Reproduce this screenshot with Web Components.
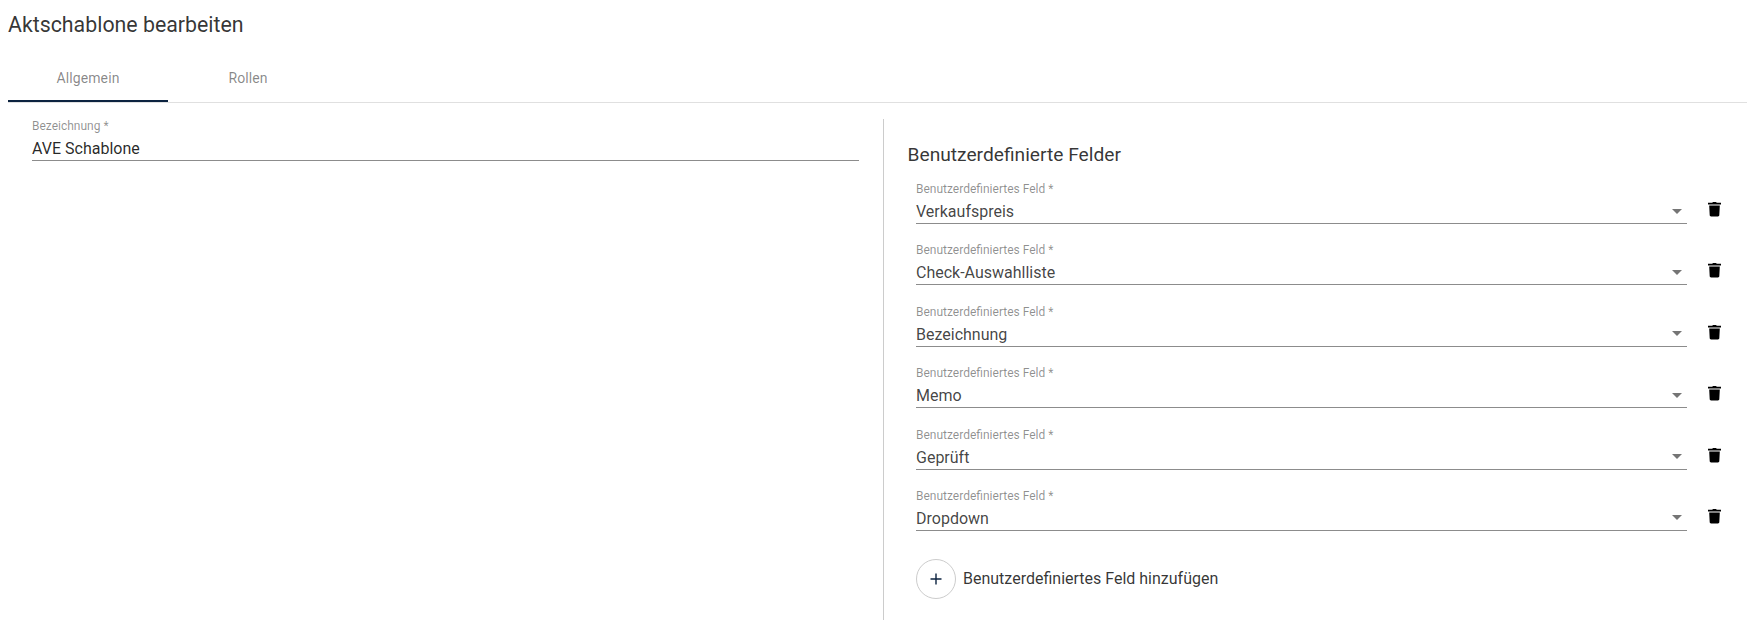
<!DOCTYPE html>
<html lang="de"><head><meta charset="utf-8"><style>
html,body{margin:0;background:#fff}
body{font-family:Roboto,sans-serif;height:620px;overflow:hidden}
</style></head><body>
<template id="t-field"><style>
:host{display:block;height:53px;position:relative;box-sizing:border-box;font-family:Roboto,sans-serif}
.l{font-size:12px;line-height:14px;color:rgba(0,0,0,.44);height:14px;white-space:nowrap}
.v{font-size:16px;line-height:20px;color:rgba(0,0,0,.85);height:20px;margin-top:6px;white-space:nowrap}
:host([select]) .v{color:rgba(0,0,0,.74)}
.u{height:1px;background:#8c8c8c;margin-top:1px}
.a{position:absolute;right:5px;top:26.5px;width:0;height:0;border-left:5px solid transparent;border-right:5px solid transparent;border-top:5px solid rgba(0,0,0,.54)}
:host(:not([select])) .a{display:none}
</style><div class="l"></div><div class="v"></div><div class="u"></div><div class="a"></div></template>
<script>
class AktField extends HTMLElement{constructor(){super();const r=this.attachShadow({mode:'open'});r.appendChild(document.getElementById('t-field').content.cloneNode(true));r.querySelector('.l').textContent=this.getAttribute('label');r.querySelector('.v').textContent=this.getAttribute('value');}}
customElements.define('akt-field',AktField);
class AktRow extends HTMLElement{constructor(){super();this.attachShadow({mode:'open'}).innerHTML=`<style>
:host{display:flex;align-items:flex-start;height:61.4px;gap:0}
.f{width:771px;flex:none}
.t{flex:none;margin-left:20px;margin-top:19px;width:15px;height:16px;display:block}
</style><div class="f"><akt-field select label="Benutzerdefiniertes Feld *" value="${this.getAttribute('value')}"></akt-field></div>
<svg class="t" viewBox="0 0 15 16" aria-hidden="true"><path fill="#000" d="M2.200 4.500h10.600l-.5 9.800c-.1.700-.6 1.200-1.300 1.200H4c-.7 0-1.200-.5-1.300-1.200zM1 1.800h4.200l.8-.8h3l.8.8H14v1.600H1z"/></svg>`;}}
customElements.define('akt-row',AktRow);
class AktTabs extends HTMLElement{constructor(){super();this.attachShadow({mode:'open'}).innerHTML=`<style>
:host{display:flex;border-bottom:1px solid #e0e0e0;height:48px;font-family:Roboto,sans-serif;font-size:14px;margin:0}
.tab{width:160px;height:48px;display:flex;align-items:center;justify-content:center;color:rgba(0,0,0,.48);box-sizing:border-box;padding-bottom:1px;letter-spacing:.1px}
.on{border-bottom:2px solid #0c2340;padding-bottom:0;padding-top:1px;color:rgba(0,0,0,.48)}
</style><div class="tab on">Allgemein</div><div class="tab">Rollen</div>`;}}
customElements.define('akt-tabs',AktTabs);
class AktAdd extends HTMLElement{constructor(){super();this.attachShadow({mode:'open'}).innerHTML=`<style>
:host{display:flex;align-items:center;gap:7px;font-family:Roboto,sans-serif;font-size:16px;color:rgba(0,0,0,.8)}
.c{width:40px;height:40px;box-sizing:border-box;border:1px solid #ccc;border-radius:50%;display:flex;align-items:center;justify-content:center}
</style><div class="c"><svg width="24" height="24" viewBox="0 0 24 24" aria-hidden="true"><path fill="#0c2340" d="M17.500 12.700h-4.800v4.800h-1.400v-4.800H6.500v-1.400h4.800V6.500h1.400v4.800h4.800z"/></svg></div><span>Benutzerdefiniertes Feld hinzufügen</span>`;}}
customElements.define('akt-add',AktAdd);
class AktPage extends HTMLElement{constructor(){super();this.attachShadow({mode:'open'}).innerHTML=`<style>
:host{display:block;font-family:Roboto,sans-serif;padding:0 0 0 8px;height:620px;box-sizing:border-box;overflow:hidden}
h1{font-size:21.33px;font-weight:400;line-height:24px;margin:0;padding-top:13px;color:rgba(0,0,0,.8);height:24px;padding-bottom:17px}
.body{display:grid;grid-template-columns:875px 1fr;padding-top:16px}
.left{padding:0 24px}
.right{border-left:1px solid #ccc;height:520px;padding:24px 0 0 24px;box-sizing:border-box}
h2{font-size:19.2px;font-weight:400;line-height:24px;margin:0 0 0 -.5px;color:rgba(0,0,0,.8)}
.rows{margin:15px 0 0 8px}
.add{margin:8.6px 0 0 8px}
</style><h1>Aktschablone bearbeiten</h1><akt-tabs></akt-tabs>
<div class="body"><div class="left"><akt-field label="Bezeichnung *" value="AVE Schablone"></akt-field></div>
<div class="right"><h2>Benutzerdefinierte Felder</h2><div class="rows">
<akt-row value="Verkaufspreis"></akt-row><akt-row value="Check-Auswahlliste"></akt-row><akt-row value="Bezeichnung"></akt-row><akt-row value="Memo"></akt-row><akt-row value="Geprüft"></akt-row><akt-row value="Dropdown"></akt-row></div>
<div class="add"><akt-add></akt-add></div></div></div>`;}}
customElements.define('akt-page',AktPage);
</script>
<akt-page></akt-page>
</body></html>
